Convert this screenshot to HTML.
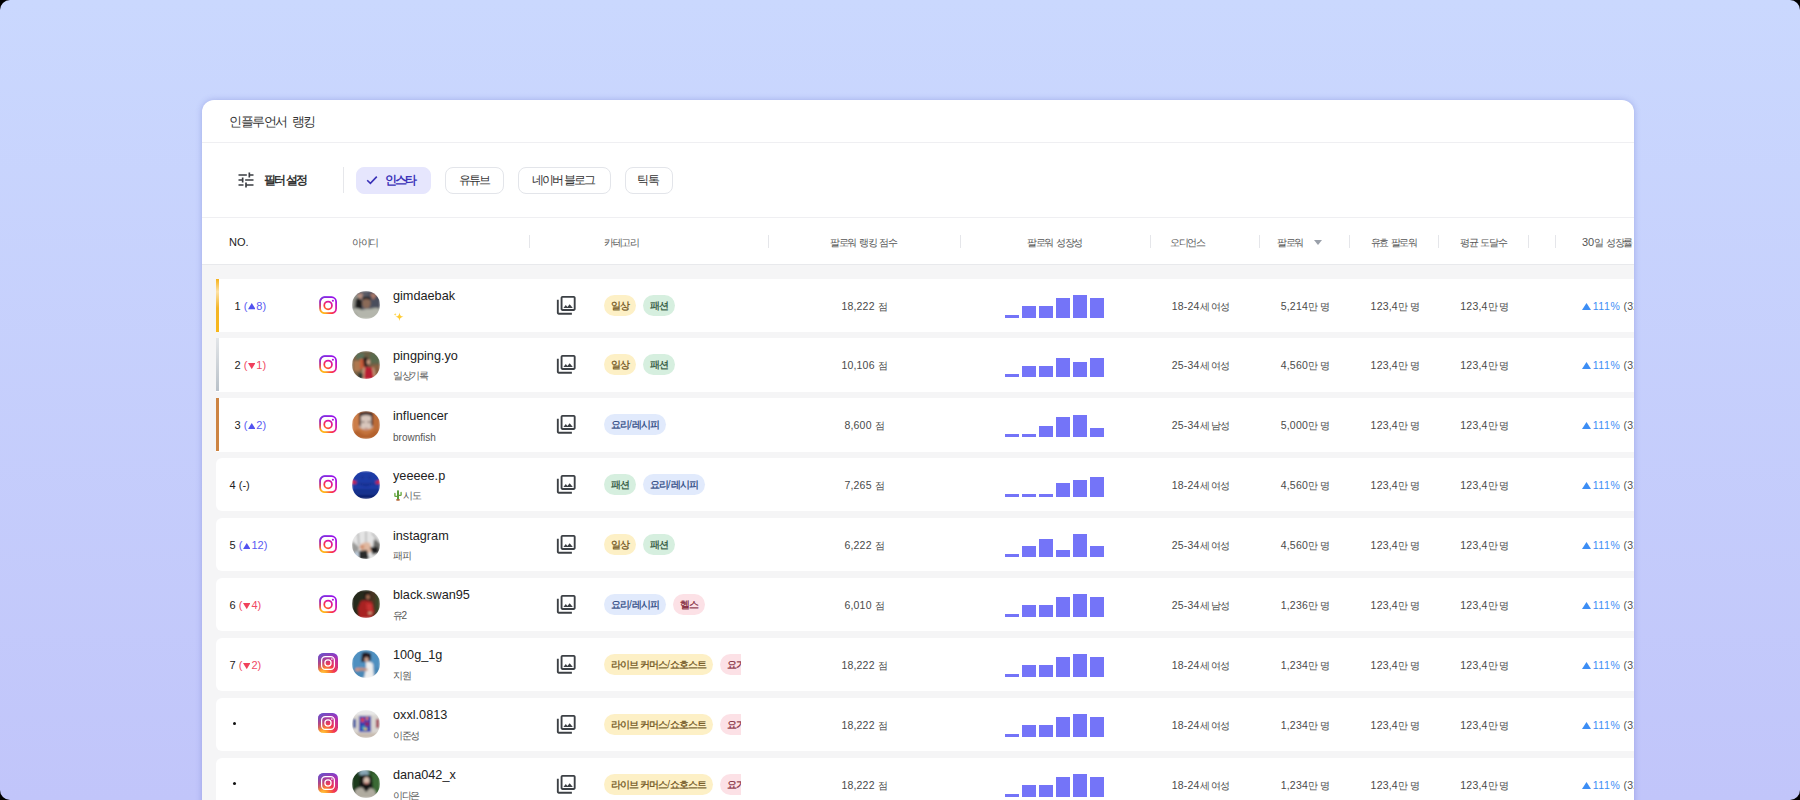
<!DOCTYPE html><html><head><meta charset="utf-8"><style>
*{box-sizing:border-box;margin:0;padding:0}
html,body{width:1800px;height:800px;overflow:hidden;background:#000;font-family:"Liberation Sans",sans-serif}
#frame{position:absolute;left:0;top:0;width:1800px;height:800px;border-radius:10px;overflow:hidden;
 background:linear-gradient(180deg,#cad8fe 0%,#c1c5fa 100%)}
#card{position:absolute;left:202px;top:100px;width:1432px;height:760px;background:#fff;border-radius:12px;overflow:hidden;
 box-shadow:0 0 6px rgba(80,90,190,.32)}
.a{position:absolute;white-space:nowrap}
#title{left:27px;top:13px;font-size:13px;color:#333;letter-spacing:-1.4px;word-spacing:2.5px}
.hl{position:absolute;left:0;width:100%;height:1px;background:#efeff2}
#body{position:absolute;left:0;top:164px;width:100%;height:700px;background:#f5f5f6;border-top:1px solid #e8e9ec}
#flt{left:62px;top:72px;font-size:12px;color:#333;font-weight:bold;letter-spacing:-2.3px;word-spacing:2px}
.chip{position:absolute;top:67px;height:27px;border:1px solid #e3e5ea;border-radius:8px;color:#333}
.chip span{position:absolute;top:4.5px;font-size:11.5px;letter-spacing:-1.9px;line-height:14px;white-space:nowrap}
.th{position:absolute;top:235px;font-size:11px;color:#555;line-height:14px;white-space:nowrap}
.th .h{font-size:10px;letter-spacing:-1.45px;word-spacing:2px}
.sep{position:absolute;top:135px;width:1px;height:13px;background:#e5e6ea}
.row{position:absolute;left:14px;width:1500px;height:53.2px;background:#fff;border-radius:6px}
.row.top{border-radius:0 6px 6px 0}
.bord{position:absolute;left:0;top:0;width:3.2px;height:53px}
.rk{position:absolute;top:20px;font-size:11px;color:#222;line-height:14px}
.ig{position:absolute;left:103px;top:17px;width:18px;height:18px}
.av{position:absolute;left:136px;top:12.5px;width:28px;height:28px}
.nm{position:absolute;left:177px;top:9.5px;font-size:12.7px;color:#222;line-height:16px}
.sub{position:absolute;left:177px;top:32px;font-size:10px;color:#555;line-height:12px}
.sub .h{letter-spacing:-1.5px}
.gal{position:absolute;left:338.8px;top:15px;width:22.5px;height:22.5px}
.tags{position:absolute;left:388px;top:16px;height:21px;width:137px;overflow:hidden;white-space:nowrap}
.tag{display:inline-block;height:21px;line-height:21px;border-radius:11px;padding:0 7px;font-size:10px;margin-right:6.5px;vertical-align:top}
.tag .h{letter-spacing:-0.95px}
.tag .h{-webkit-text-stroke:0.25px currentColor}
.y{background:#fdf0c6;color:#6e521a}.g{background:#d6efdf;color:#2a5238}.b{background:#e1eafc;color:#27427c}.p{background:#fce1e6;color:#82283a}
.sc{position:absolute;left:552px;width:192px;text-align:center;top:20px;font-size:10.5px;letter-spacing:0.2px;color:#4a4a4a;line-height:14px}
.bars{position:absolute;left:789px;top:0;width:100px;height:53px}
.bars i{position:absolute;bottom:14px;width:13.6px;background:#7474f8}
.c{position:absolute;top:20px;font-size:10.5px;letter-spacing:0.2px;color:#4a4a4a;line-height:14px;white-space:nowrap}
.c .h,.sc .h{font-size:10px;letter-spacing:-1.2px;word-spacing:1.5px}
.tri{width:7.5px;height:6.2px;vertical-align:0px;margin:0 1px 0 0.5px}.tri2{width:9px;height:7px;vertical-align:0px;margin-right:1.5px}
.up{color:#5a5af2}.dn{color:#f04a64}.gr{color:#3d8ef5}
</style></head><body><div id="frame"><div id="card">
<div class="a" id="title">인플루언서 랭킹</div>
<div class="hl" style="top:42px"></div>
<svg class="a" style="left:34.3px;top:70px" width="20" height="20" viewBox="0 0 24 24"><path fill="#3a3d42" d="M3 17v2h6v-2H3zM3 5v2h10V5H3zm10 16v-2h8v-2h-8v-2h-2v6h2zM7 9v2H3v2h4v2h2V9H7zm14 4v-2H11v2h10zm-6-4h2V7h4V5h-4V3h-2v6z"/></svg>
<div class="a" id="flt">필터 설정</div>
<div class="a" style="left:141px;top:67px;width:1px;height:26px;background:#e6e7eb"></div>
<div class="chip" style="left:154px;width:75px;background:#e6e6fd;border-color:#e6e6fd;color:#3b32b8"><svg style="position:absolute;left:9px;top:7px" width="12" height="10" viewBox="0 0 12 10"><path d="M1.2 5.2l3.2 3.2L10.8 1.6" fill="none" stroke="#3b32b8" stroke-width="1.6"/></svg><span style="left:27.5px;font-weight:bold">인스타</span></div>
<div class="chip" style="left:243px;width:59px"><span style="left:13px">유튜브</span></div>
<div class="chip" style="left:316px;width:93px"><span style="left:13px;letter-spacing:-2.2px;word-spacing:2px">네이버 블로그</span></div>
<div class="chip" style="left:422.7px;width:48.5px"><span style="left:11.8px">틱톡</span></div>
<div class="hl" style="top:117px"></div>
<div class="th" style="left:27px;top:134.5px;color:#222">NO.</div>
<div class="th" style="left:150px;top:134.5px"><span class="h">아이디</span></div>
<div class="th" style="left:402px;top:134.5px"><span class="h">카테고리</span></div>
<div class="th" style="left:628px;top:134.5px"><span class="h">팔로워 랭킹 점수</span></div>
<div class="th" style="left:825px;top:134.5px"><span class="h">팔로워 성장성</span></div>
<div class="th" style="left:968px;top:134.5px"><span class="h">오디언스</span></div>
<div class="th" style="left:1075px;top:134.5px"><span class="h">팔로워</span></div>
<div class="th" style="left:1168.5px;top:134.5px"><span class="h">유효 팔로워</span></div>
<div class="th" style="left:1258px;top:134.5px"><span class="h">평균 도달수</span></div>
<div class="th" style="left:1380px;top:134.5px">30<span class="h">일 성장률</span></div>
<div class="sep" style="left:327px"></div>
<div class="sep" style="left:566px"></div>
<div class="sep" style="left:758px"></div>
<div class="sep" style="left:948px"></div>
<div class="sep" style="left:1057px"></div>
<div class="sep" style="left:1147px"></div>
<div class="sep" style="left:1236px"></div>
<div class="sep" style="left:1326px"></div>
<div class="sep" style="left:1353px"></div>
<svg class="a" style="left:1112px;top:140px" width="8" height="5" viewBox="0 0 8 5"><path d="M0 0h8L4 5z" fill="#9aa0aa"/></svg>
<div id="body">
<div class="row top" style="top:13.6px"><div class="bord" style="background:linear-gradient(180deg,#f6b21a 0%,#fde2a6 24%,#f3b426 55%,#f8b718 100%)"></div><div class="rk" style="left:18.5px">1 <span class="up">(<svg class="tri" viewBox="0 0 8 6.5"><path d="M4 0L8 6.5H0z" fill="#5252f0"/></svg>8)</span></div><svg class="ig" viewBox="0 0 18 18"><defs><radialGradient id="igo1" gradientUnits="userSpaceOnUse" cx="3" cy="19" r="22"><stop offset="0" stop-color="#ffd21a"/><stop offset="0.18" stop-color="#ffa81e"/><stop offset="0.42" stop-color="#ff3d3a"/><stop offset="0.65" stop-color="#e01a9a"/><stop offset="0.9" stop-color="#a010e6"/><stop offset="1" stop-color="#9010ea"/></radialGradient><linearGradient id="igl1" gradientUnits="userSpaceOnUse" x1="0" y1="0" x2="8" y2="8"><stop offset="0" stop-color="#5a40f0" stop-opacity="1"/><stop offset="1" stop-color="#5a40f0" stop-opacity="0"/></linearGradient></defs><g fill="none" stroke-width="1.75"><g stroke="url(#igo1)"><rect x="1.1" y="1.2" width="16" height="16" rx="4.6"/><circle cx="9.1" cy="9.4" r="3.85"/></g><g stroke="url(#igl1)"><rect x="1.1" y="1.2" width="16" height="16" rx="4.6"/></g></g><circle cx="13.9" cy="4.7" r="1.05" fill="#b012d8"/></svg><svg class="av" viewBox="0 0 28 28"><defs><clipPath id="avc0"><circle cx="14" cy="14" r="14"/></clipPath><filter id="avb0" x="-10%" y="-10%" width="120%" height="120%"><feGaussianBlur stdDeviation="0.9"/></filter></defs><g clip-path="url(#avc0)"><g filter="url(#avb0)"><rect width="28" height="28" fill="#5a5c66"/><rect x="16" y="0" width="12" height="16" fill="#4a4d5c"/>
<path d="M0 6 Q4 2 8 3 L10 12 L4 18 L0 16z" fill="#8e8e86"/><path d="M5 4 Q8 1 11 3 L9 10z" fill="#b89080"/><path d="M18 3 Q22 1 25 4 L21 9z" fill="#a87868"/>
<path d="M4 8 Q8 6 10 10 L10 19 L3 17z" fill="#1c1c1e"/>
<ellipse cx="14.5" cy="12" rx="4.2" ry="5.5" fill="#8a6a58"/><path d="M10 7 Q14 4 19 7 L18 9 Q14 7 11 9z" fill="#2a2220"/>
<path d="M0 18 Q6 16 10 19 L14 18 L19 18 Q24 16 28 18 L28 28 L0 28z" fill="#b4b6ac"/><path d="M3 20 L6 28 L4 28z" fill="#8a8c84"/></g></g></svg><div class="nm">gimdaebak</div><div class="sub"><svg width="11" height="10" viewBox="0 0 11 10" style="vertical-align:top;margin-top:1px"><path d="M6.5 0.5C7 3.5 7.5 4 10.5 4.8 7.5 5.6 7 6 6.5 9.2 6 6 5.5 5.6 2.5 4.8 5.5 4 6 3.5 6.5.5z" fill="#ffcc33"/><path d="M2.2 0.8C2.4 2 2.6 2.2 3.6 2.4 2.6 2.6 2.4 2.8 2.2 4 2 2.8 1.8 2.6.8 2.4 1.8 2.2 2 2 2.2.8z" fill="#ffd54a"/></svg></div><svg class="gal" viewBox="0 0 24 24"><path fill="#3c4045" d="M20 4v12H8V4h12m0-2H8c-1.1 0-2 .9-2 2v12c0 1.1.9 2 2 2h12c1.1 0 2-.9 2-2V4c0-1.1-.9-2-2-2zm-8.5 9.67l1.69 2.26 2.48-3.1L19 15H9zM2 6v14c0 1.1.9 2 2 2h14v-2H4V6H2z"/></svg><div class="tags"><span class="tag y"><span class="h">일상</span></span><span class="tag g"><span class="h">패션</span></span></div><div class="sc">18,222 <span class="h">점</span></div><div class="bars"><i style="left:0.0px;height:3px"></i><i style="left:17.0px;height:11.5px"></i><i style="left:34.0px;height:11.5px"></i><i style="left:51.0px;height:20px"></i><i style="left:68.0px;height:22.7px"></i><i style="left:85.0px;height:20px"></i></div><div class="c" style="left:955.7px">18-24<span class="h">세 여성</span></div><div class="c" style="left:1064.7px">5,214<span class="h">만 명</span></div><div class="c" style="left:1154.6px">123,4<span class="h">만 명</span></div><div class="c" style="left:1244.3px">123,4<span class="h">만 명</span></div><div class="c gr" style="left:1366.2px"><svg class="tri2" viewBox="0 0 9 7"><path d="M4.5 0L9 7H0z" fill="#3d8ef5"/></svg><span style="letter-spacing:0.6px">111%</span> <span style="color:#555">(32.4만)</span></div></div>
<div class="row top" style="top:73.475px"><div class="bord" style="background:linear-gradient(180deg,#e2e5e8 0%,#b9c1c9 100%)"></div><div class="rk" style="left:18.5px">2 <span class="dn">(<svg class="tri" viewBox="0 0 8 6.5"><path d="M0 0H8L4 6.5z" fill="#f0405c"/></svg>1)</span></div><svg class="ig" viewBox="0 0 18 18"><defs><radialGradient id="igo2" gradientUnits="userSpaceOnUse" cx="3" cy="19" r="22"><stop offset="0" stop-color="#ffd21a"/><stop offset="0.18" stop-color="#ffa81e"/><stop offset="0.42" stop-color="#ff3d3a"/><stop offset="0.65" stop-color="#e01a9a"/><stop offset="0.9" stop-color="#a010e6"/><stop offset="1" stop-color="#9010ea"/></radialGradient><linearGradient id="igl2" gradientUnits="userSpaceOnUse" x1="0" y1="0" x2="8" y2="8"><stop offset="0" stop-color="#5a40f0" stop-opacity="1"/><stop offset="1" stop-color="#5a40f0" stop-opacity="0"/></linearGradient></defs><g fill="none" stroke-width="1.75"><g stroke="url(#igo2)"><rect x="1.1" y="1.2" width="16" height="16" rx="4.6"/><circle cx="9.1" cy="9.4" r="3.85"/></g><g stroke="url(#igl2)"><rect x="1.1" y="1.2" width="16" height="16" rx="4.6"/></g></g><circle cx="13.9" cy="4.7" r="1.05" fill="#b012d8"/></svg><svg class="av" viewBox="0 0 28 28"><defs><clipPath id="avc1"><circle cx="14" cy="14" r="14"/></clipPath><filter id="avb1" x="-10%" y="-10%" width="120%" height="120%"><feGaussianBlur stdDeviation="0.9"/></filter></defs><g clip-path="url(#avc1)"><g filter="url(#avb1)"><rect width="28" height="28" fill="#6a5e44"/><rect x="0" y="0" width="9" height="28" fill="#7a6446"/><rect x="2" y="10" width="6" height="10" fill="#b07850"/><rect x="8" y="4" width="4" height="14" fill="#c85a38"/>
<rect x="18" y="2" width="10" height="10" fill="#5a6a4e"/><rect x="20" y="14" width="8" height="12" fill="#8a6040"/><rect x="4" y="2" width="8" height="6" fill="#5a7058"/>
<path d="M11 7 Q15 5 17 9 L17 15 L12 16z" fill="#2a1e1c"/><ellipse cx="16.5" cy="11" rx="1.8" ry="2.8" fill="#c89a80"/>
<path d="M13 16 L20 16 L23 28 L10 28z" fill="#b81c30"/><path d="M11 17 L13 16 L12 28 L9 28z" fill="#c8a080"/><path d="M20 16 L22 17 L24 28 L22 28z" fill="#c8a080"/><rect x="6" y="22" width="5" height="6" fill="#303830"/></g></g></svg><div class="nm">pingping.yo</div><div class="sub"><span class="h">일상기록</span></div><svg class="gal" viewBox="0 0 24 24"><path fill="#3c4045" d="M20 4v12H8V4h12m0-2H8c-1.1 0-2 .9-2 2v12c0 1.1.9 2 2 2h12c1.1 0 2-.9 2-2V4c0-1.1-.9-2-2-2zm-8.5 9.67l1.69 2.26 2.48-3.1L19 15H9zM2 6v14c0 1.1.9 2 2 2h14v-2H4V6H2z"/></svg><div class="tags"><span class="tag y"><span class="h">일상</span></span><span class="tag g"><span class="h">패션</span></span></div><div class="sc">10,106 <span class="h">점</span></div><div class="bars"><i style="left:0.0px;height:3px"></i><i style="left:17.0px;height:11.6px"></i><i style="left:34.0px;height:11.6px"></i><i style="left:51.0px;height:19.9px"></i><i style="left:68.0px;height:15.8px"></i><i style="left:85.0px;height:19.9px"></i></div><div class="c" style="left:955.7px">25-34<span class="h">세 여성</span></div><div class="c" style="left:1064.7px">4,560<span class="h">만 명</span></div><div class="c" style="left:1154.6px">123,4<span class="h">만 명</span></div><div class="c" style="left:1244.3px">123,4<span class="h">만 명</span></div><div class="c gr" style="left:1366.2px"><svg class="tri2" viewBox="0 0 9 7"><path d="M4.5 0L9 7H0z" fill="#3d8ef5"/></svg><span style="letter-spacing:0.6px">111%</span> <span style="color:#555">(32.4만)</span></div></div>
<div class="row top" style="top:133.35px"><div class="bord" style="background:#cd8442"></div><div class="rk" style="left:18.5px">3 <span class="up">(<svg class="tri" viewBox="0 0 8 6.5"><path d="M4 0L8 6.5H0z" fill="#5252f0"/></svg>2)</span></div><svg class="ig" viewBox="0 0 18 18"><defs><radialGradient id="igo3" gradientUnits="userSpaceOnUse" cx="3" cy="19" r="22"><stop offset="0" stop-color="#ffd21a"/><stop offset="0.18" stop-color="#ffa81e"/><stop offset="0.42" stop-color="#ff3d3a"/><stop offset="0.65" stop-color="#e01a9a"/><stop offset="0.9" stop-color="#a010e6"/><stop offset="1" stop-color="#9010ea"/></radialGradient><linearGradient id="igl3" gradientUnits="userSpaceOnUse" x1="0" y1="0" x2="8" y2="8"><stop offset="0" stop-color="#5a40f0" stop-opacity="1"/><stop offset="1" stop-color="#5a40f0" stop-opacity="0"/></linearGradient></defs><g fill="none" stroke-width="1.75"><g stroke="url(#igo3)"><rect x="1.1" y="1.2" width="16" height="16" rx="4.6"/><circle cx="9.1" cy="9.4" r="3.85"/></g><g stroke="url(#igl3)"><rect x="1.1" y="1.2" width="16" height="16" rx="4.6"/></g></g><circle cx="13.9" cy="4.7" r="1.05" fill="#b012d8"/></svg><svg class="av" viewBox="0 0 28 28"><defs><clipPath id="avc2"><circle cx="14" cy="14" r="14"/></clipPath><filter id="avb2" x="-10%" y="-10%" width="120%" height="120%"><feGaussianBlur stdDeviation="0.9"/></filter></defs><g clip-path="url(#avc2)"><g filter="url(#avb2)"><rect width="28" height="28" fill="#c4743e"/>
<path d="M8 3 Q14 0 20 3 L21 16 Q14 22 7 16z" fill="#d8c6bc"/><path d="M7 2 Q14 -1 21 2 L21 9 L19 5 Q14 3 9 5 L7 9z" fill="#3a2c2a"/><path d="M7 5 L9 5 L9 16 L7 14z" fill="#4a3430"/><path d="M21 5 L19 5 L19 16 L21 14z" fill="#4a3430"/>
<rect x="9.5" y="10.5" width="3" height="1" fill="#50403a"/><rect x="15.5" y="10.5" width="3" height="1" fill="#50403a"/><rect x="12.5" y="17" width="3.5" height="1.2" fill="#b87870"/>
<path d="M0 12 Q6 22 14 24 Q22 22 28 12 L28 28 L0 28z" fill="#b4622e"/><path d="M0 0 L7 0 L7 18 L0 22z" fill="#cc7e4a"/><path d="M28 0 L21 0 L21 18 L28 22z" fill="#bc6c38"/></g></g></svg><div class="nm">influencer</div><div class="sub"><span style="position:relative;top:1.3px">brownfish</span></div><svg class="gal" viewBox="0 0 24 24"><path fill="#3c4045" d="M20 4v12H8V4h12m0-2H8c-1.1 0-2 .9-2 2v12c0 1.1.9 2 2 2h12c1.1 0 2-.9 2-2V4c0-1.1-.9-2-2-2zm-8.5 9.67l1.69 2.26 2.48-3.1L19 15H9zM2 6v14c0 1.1.9 2 2 2h14v-2H4V6H2z"/></svg><div class="tags"><span class="tag b"><span class="h">요리</span>/<span class="h">레시피</span></span></div><div class="sc">8,600 <span class="h">점</span></div><div class="bars"><i style="left:0.0px;height:2.9px"></i><i style="left:17.0px;height:2.9px"></i><i style="left:34.0px;height:11.6px"></i><i style="left:51.0px;height:20.2px"></i><i style="left:68.0px;height:22.8px"></i><i style="left:85.0px;height:9.8px"></i></div><div class="c" style="left:955.7px">25-34<span class="h">세 남성</span></div><div class="c" style="left:1064.7px">5,000<span class="h">만 명</span></div><div class="c" style="left:1154.6px">123,4<span class="h">만 명</span></div><div class="c" style="left:1244.3px">123,4<span class="h">만 명</span></div><div class="c gr" style="left:1366.2px"><svg class="tri2" viewBox="0 0 9 7"><path d="M4.5 0L9 7H0z" fill="#3d8ef5"/></svg><span style="letter-spacing:0.6px">111%</span> <span style="color:#555">(32.4만)</span></div></div>
<div class="row" style="top:193.225px"><div class="rk" style="left:13.6px">4 (-)</div><svg class="ig" viewBox="0 0 18 18"><defs><radialGradient id="igo4" gradientUnits="userSpaceOnUse" cx="3" cy="19" r="22"><stop offset="0" stop-color="#ffd21a"/><stop offset="0.18" stop-color="#ffa81e"/><stop offset="0.42" stop-color="#ff3d3a"/><stop offset="0.65" stop-color="#e01a9a"/><stop offset="0.9" stop-color="#a010e6"/><stop offset="1" stop-color="#9010ea"/></radialGradient><linearGradient id="igl4" gradientUnits="userSpaceOnUse" x1="0" y1="0" x2="8" y2="8"><stop offset="0" stop-color="#5a40f0" stop-opacity="1"/><stop offset="1" stop-color="#5a40f0" stop-opacity="0"/></linearGradient></defs><g fill="none" stroke-width="1.75"><g stroke="url(#igo4)"><rect x="1.1" y="1.2" width="16" height="16" rx="4.6"/><circle cx="9.1" cy="9.4" r="3.85"/></g><g stroke="url(#igl4)"><rect x="1.1" y="1.2" width="16" height="16" rx="4.6"/></g></g><circle cx="13.9" cy="4.7" r="1.05" fill="#b012d8"/></svg><svg class="av" viewBox="0 0 28 28"><defs><clipPath id="avc3"><circle cx="14" cy="14" r="14"/></clipPath><filter id="avb3" x="-10%" y="-10%" width="120%" height="120%"><feGaussianBlur stdDeviation="0.9"/></filter></defs><g clip-path="url(#avc3)"><g filter="url(#avb3)"><rect width="28" height="28" fill="#1f3aa6"/><rect x="0" y="18" width="28" height="10" fill="#18308e"/><rect x="0" y="12" width="28" height="2" fill="#1a3296"/>
<path d="M0 9 L5 11 L3 13 L0 12z" fill="#e0202a"/><path d="M28 9 L23 11 L25 13 L28 12z" fill="#e0202a"/><path d="M8 12 Q14 17 20 12" stroke="#142a80" stroke-width="1" fill="none"/>
<path d="M9 5 L12 8 M12 5 L9 8 M16 5 L19 8 M19 5 L16 8" stroke="#142a80" stroke-width=".8"/><rect x="0" y="24" width="28" height="4" fill="#10246e"/></g></g></svg><div class="nm">yeeeee.p</div><div class="sub"><svg width="10" height="11" viewBox="0 0 10 11" style="vertical-align:top;margin-top:0px"><path d="M4 1.2c0-.6.4-1 1-1s1 .4 1 1V10H4z" fill="#5a9a3a"/><path d="M1.2 3.5c0-.5.3-.8.7-.8s.7.3.7.8v2.2H4v1.4H2.6C1.8 7.1 1.2 6.5 1.2 5.7z" fill="#6aaa42"/><path d="M8.8 2.5c0-.5-.3-.8-.7-.8s-.7.3-.7.8v2.2H6v1.4h1.4c.8 0 1.4-.6 1.4-1.4z" fill="#6aaa42"/><path d="M3 9.2h4l-.5 1.6h-3z" fill="#b86a3a"/></svg><span class="h">시도</span></div><svg class="gal" viewBox="0 0 24 24"><path fill="#3c4045" d="M20 4v12H8V4h12m0-2H8c-1.1 0-2 .9-2 2v12c0 1.1.9 2 2 2h12c1.1 0 2-.9 2-2V4c0-1.1-.9-2-2-2zm-8.5 9.67l1.69 2.26 2.48-3.1L19 15H9zM2 6v14c0 1.1.9 2 2 2h14v-2H4V6H2z"/></svg><div class="tags"><span class="tag g"><span class="h">패션</span></span><span class="tag b"><span class="h">요리</span>/<span class="h">레시피</span></span></div><div class="sc">7,265 <span class="h">점</span></div><div class="bars"><i style="left:0.0px;height:3.2px"></i><i style="left:17.0px;height:3.2px"></i><i style="left:34.0px;height:3.2px"></i><i style="left:51.0px;height:14.5px"></i><i style="left:68.0px;height:17px"></i><i style="left:85.0px;height:20.2px"></i></div><div class="c" style="left:955.7px">18-24<span class="h">세 여성</span></div><div class="c" style="left:1064.7px">4,560<span class="h">만 명</span></div><div class="c" style="left:1154.6px">123,4<span class="h">만 명</span></div><div class="c" style="left:1244.3px">123,4<span class="h">만 명</span></div><div class="c gr" style="left:1366.2px"><svg class="tri2" viewBox="0 0 9 7"><path d="M4.5 0L9 7H0z" fill="#3d8ef5"/></svg><span style="letter-spacing:0.6px">111%</span> <span style="color:#555">(32.4만)</span></div></div>
<div class="row" style="top:253.1px"><div class="rk" style="left:13.6px">5 <span class="up">(<svg class="tri" viewBox="0 0 8 6.5"><path d="M4 0L8 6.5H0z" fill="#5252f0"/></svg>12)</span></div><svg class="ig" viewBox="0 0 18 18"><defs><radialGradient id="igo5" gradientUnits="userSpaceOnUse" cx="3" cy="19" r="22"><stop offset="0" stop-color="#ffd21a"/><stop offset="0.18" stop-color="#ffa81e"/><stop offset="0.42" stop-color="#ff3d3a"/><stop offset="0.65" stop-color="#e01a9a"/><stop offset="0.9" stop-color="#a010e6"/><stop offset="1" stop-color="#9010ea"/></radialGradient><linearGradient id="igl5" gradientUnits="userSpaceOnUse" x1="0" y1="0" x2="8" y2="8"><stop offset="0" stop-color="#5a40f0" stop-opacity="1"/><stop offset="1" stop-color="#5a40f0" stop-opacity="0"/></linearGradient></defs><g fill="none" stroke-width="1.75"><g stroke="url(#igo5)"><rect x="1.1" y="1.2" width="16" height="16" rx="4.6"/><circle cx="9.1" cy="9.4" r="3.85"/></g><g stroke="url(#igl5)"><rect x="1.1" y="1.2" width="16" height="16" rx="4.6"/></g></g><circle cx="13.9" cy="4.7" r="1.05" fill="#b012d8"/></svg><svg class="av" viewBox="0 0 28 28"><defs><clipPath id="avc4"><circle cx="14" cy="14" r="14"/></clipPath><filter id="avb4" x="-10%" y="-10%" width="120%" height="120%"><feGaussianBlur stdDeviation="0.9"/></filter></defs><g clip-path="url(#avc4)"><g filter="url(#avb4)"><rect width="28" height="28" fill="#e4e4e4"/><path d="M6 2 L7 14" stroke="#909090" stroke-width="1"/><path d="M14 0 L14 12" stroke="#a0a0a0" stroke-width="1"/><path d="M20 2 L26 10" stroke="#808080" stroke-width="1"/>
<path d="M0 10 L7 16 L6 24 L0 24z" fill="#9a9a98"/><path d="M22 8 L28 12 L28 22 L20 24z" fill="#6a6a68"/>
<path d="M8 14 Q12 10 18 12 L20 20 L14 24 L9 20z" fill="#e0b8a0"/><ellipse cx="10" cy="16" rx="2.5" ry="2" fill="#d09070"/>
<path d="M7 20 L15 19 L17 28 L7 28z" fill="#2a2a2a"/><path d="M18 16 L26 16 L26 22 L20 22z" fill="#1a1a1a"/><path d="M3 20 L7 22 L6 28 L2 28z" fill="#b8c8d8"/></g></g></svg><div class="nm">instagram</div><div class="sub"><span class="h">패피</span></div><svg class="gal" viewBox="0 0 24 24"><path fill="#3c4045" d="M20 4v12H8V4h12m0-2H8c-1.1 0-2 .9-2 2v12c0 1.1.9 2 2 2h12c1.1 0 2-.9 2-2V4c0-1.1-.9-2-2-2zm-8.5 9.67l1.69 2.26 2.48-3.1L19 15H9zM2 6v14c0 1.1.9 2 2 2h14v-2H4V6H2z"/></svg><div class="tags"><span class="tag y"><span class="h">일상</span></span><span class="tag g"><span class="h">패션</span></span></div><div class="sc">6,222 <span class="h">점</span></div><div class="bars"><i style="left:0.0px;height:3.4px"></i><i style="left:17.0px;height:11.6px"></i><i style="left:34.0px;height:17.7px"></i><i style="left:51.0px;height:7.6px"></i><i style="left:68.0px;height:22.8px"></i><i style="left:85.0px;height:11.6px"></i></div><div class="c" style="left:955.7px">25-34<span class="h">세 여성</span></div><div class="c" style="left:1064.7px">4,560<span class="h">만 명</span></div><div class="c" style="left:1154.6px">123,4<span class="h">만 명</span></div><div class="c" style="left:1244.3px">123,4<span class="h">만 명</span></div><div class="c gr" style="left:1366.2px"><svg class="tri2" viewBox="0 0 9 7"><path d="M4.5 0L9 7H0z" fill="#3d8ef5"/></svg><span style="letter-spacing:0.6px">111%</span> <span style="color:#555">(32.4만)</span></div></div>
<div class="row" style="top:312.975px"><div class="rk" style="left:13.6px">6 <span class="dn">(<svg class="tri" viewBox="0 0 8 6.5"><path d="M0 0H8L4 6.5z" fill="#f0405c"/></svg>4)</span></div><svg class="ig" viewBox="0 0 18 18"><defs><radialGradient id="igo6" gradientUnits="userSpaceOnUse" cx="3" cy="19" r="22"><stop offset="0" stop-color="#ffd21a"/><stop offset="0.18" stop-color="#ffa81e"/><stop offset="0.42" stop-color="#ff3d3a"/><stop offset="0.65" stop-color="#e01a9a"/><stop offset="0.9" stop-color="#a010e6"/><stop offset="1" stop-color="#9010ea"/></radialGradient><linearGradient id="igl6" gradientUnits="userSpaceOnUse" x1="0" y1="0" x2="8" y2="8"><stop offset="0" stop-color="#5a40f0" stop-opacity="1"/><stop offset="1" stop-color="#5a40f0" stop-opacity="0"/></linearGradient></defs><g fill="none" stroke-width="1.75"><g stroke="url(#igo6)"><rect x="1.1" y="1.2" width="16" height="16" rx="4.6"/><circle cx="9.1" cy="9.4" r="3.85"/></g><g stroke="url(#igl6)"><rect x="1.1" y="1.2" width="16" height="16" rx="4.6"/></g></g><circle cx="13.9" cy="4.7" r="1.05" fill="#b012d8"/></svg><svg class="av" viewBox="0 0 28 28"><defs><clipPath id="avc5"><circle cx="14" cy="14" r="14"/></clipPath><filter id="avb5" x="-10%" y="-10%" width="120%" height="120%"><feGaussianBlur stdDeviation="0.9"/></filter></defs><g clip-path="url(#avc5)"><g filter="url(#avb5)"><rect width="28" height="28" fill="#272a1e"/><rect x="18" y="0" width="10" height="28" fill="#4a3424"/><rect x="24" y="4" width="3" height="20" fill="#3a4a2a"/>
<path d="M12 3 Q16 1 19 4 L19 10 L13 11z" fill="#281c18"/><ellipse cx="16" cy="7" rx="2" ry="2.6" fill="#a06a50"/>
<path d="M9 11 Q14 9 20 12 L22 22 L20 28 L7 28 L6 18z" fill="#a82424"/><path d="M14 13 L20 14 L21 22 L15 20z" fill="#c83030"/><ellipse cx="18" cy="23" rx="2" ry="1.5" fill="#c8a080"/></g></g></svg><div class="nm">black.swan95</div><div class="sub"><span class="h">유</span>2</div><svg class="gal" viewBox="0 0 24 24"><path fill="#3c4045" d="M20 4v12H8V4h12m0-2H8c-1.1 0-2 .9-2 2v12c0 1.1.9 2 2 2h12c1.1 0 2-.9 2-2V4c0-1.1-.9-2-2-2zm-8.5 9.67l1.69 2.26 2.48-3.1L19 15H9zM2 6v14c0 1.1.9 2 2 2h14v-2H4V6H2z"/></svg><div class="tags"><span class="tag b"><span class="h">요리</span>/<span class="h">레시피</span></span><span class="tag p"><span class="h">헬스</span></span></div><div class="sc">6,010 <span class="h">점</span></div><div class="bars"><i style="left:0.0px;height:3px"></i><i style="left:17.0px;height:11.5px"></i><i style="left:34.0px;height:11.5px"></i><i style="left:51.0px;height:20px"></i><i style="left:68.0px;height:22.7px"></i><i style="left:85.0px;height:20px"></i></div><div class="c" style="left:955.7px">25-34<span class="h">세 남성</span></div><div class="c" style="left:1064.7px">1,236<span class="h">만 명</span></div><div class="c" style="left:1154.6px">123,4<span class="h">만 명</span></div><div class="c" style="left:1244.3px">123,4<span class="h">만 명</span></div><div class="c gr" style="left:1366.2px"><svg class="tri2" viewBox="0 0 9 7"><path d="M4.5 0L9 7H0z" fill="#3d8ef5"/></svg><span style="letter-spacing:0.6px">111%</span> <span style="color:#555">(32.4만)</span></div></div>
<div class="row" style="top:372.85px"><div class="rk" style="left:13.6px">7 <span class="dn">(<svg class="tri" viewBox="0 0 8 6.5"><path d="M0 0H8L4 6.5z" fill="#f0405c"/></svg>2)</span></div><svg class="ig" style="left:102px;top:15px;width:20px;height:20px" viewBox="0 0 20 20"><defs><radialGradient id="igf7" cx="0.25" cy="1.05" r="1.25"><stop offset="0" stop-color="#ffd34a"/><stop offset="0.18" stop-color="#ff9a2a"/><stop offset="0.45" stop-color="#f3394f"/><stop offset="0.75" stop-color="#c42f9a"/><stop offset="1" stop-color="#7a3ad8"/></radialGradient><linearGradient id="igb7" x1="0" y1="0" x2="0.5" y2="0.6"><stop offset="0" stop-color="#4f5bd5" stop-opacity=".9"/><stop offset="1" stop-color="#4f5bd5" stop-opacity="0"/></linearGradient></defs><rect x="0" y="0" width="20" height="20" rx="5.5" fill="url(#igf7)"/><rect x="0" y="0" width="20" height="20" rx="5.5" fill="url(#igb7)"/><rect x="3.6" y="3.6" width="12.8" height="12.8" rx="3.6" fill="none" stroke="#fff" stroke-width="1.25"/><circle cx="10" cy="10" r="3.1" fill="none" stroke="#fff" stroke-width="1.25"/><circle cx="13.9" cy="6.1" r=".8" fill="#fff"/></svg><svg class="av" viewBox="0 0 28 28"><defs><clipPath id="avc6"><circle cx="14" cy="14" r="14"/></clipPath><filter id="avb6" x="-10%" y="-10%" width="120%" height="120%"><feGaussianBlur stdDeviation="0.9"/></filter></defs><g clip-path="url(#avc6)"><g filter="url(#avb6)"><rect width="28" height="28" fill="#5090c0"/><rect x="0" y="18" width="28" height="10" fill="#4a88b6"/>
<path d="M10 3 Q15 1 19 4 L19 10 L15 12 L9 12z" fill="#24181a"/><ellipse cx="14.5" cy="9.5" rx="2.2" ry="2.5" fill="#c8a090"/>
<path d="M14 12 Q19 11 21 14 L22 28 L12 28 L14 18z" fill="#eeeeee"/><path d="M4 18 Q10 17 16 19 L15 21 Q9 20 5 21z" fill="#c89078"/><ellipse cx="5" cy="19.5" rx="2" ry="1.6" fill="#d89a80"/></g></g></svg><div class="nm">100g_1g</div><div class="sub"><span class="h">지원</span></div><svg class="gal" viewBox="0 0 24 24"><path fill="#3c4045" d="M20 4v12H8V4h12m0-2H8c-1.1 0-2 .9-2 2v12c0 1.1.9 2 2 2h12c1.1 0 2-.9 2-2V4c0-1.1-.9-2-2-2zm-8.5 9.67l1.69 2.26 2.48-3.1L19 15H9zM2 6v14c0 1.1.9 2 2 2h14v-2H4V6H2z"/></svg><div class="tags"><span class="tag y"><span class="h">라이브 커머스</span>/<span class="h">쇼호스트</span></span><span class="tag p"><span class="h">요가</span></span></div><div class="sc">18,222 <span class="h">점</span></div><div class="bars"><i style="left:0.0px;height:3px"></i><i style="left:17.0px;height:11.5px"></i><i style="left:34.0px;height:11.5px"></i><i style="left:51.0px;height:20px"></i><i style="left:68.0px;height:22.7px"></i><i style="left:85.0px;height:20px"></i></div><div class="c" style="left:955.7px">18-24<span class="h">세 여성</span></div><div class="c" style="left:1064.7px">1,234<span class="h">만 명</span></div><div class="c" style="left:1154.6px">123,4<span class="h">만 명</span></div><div class="c" style="left:1244.3px">123,4<span class="h">만 명</span></div><div class="c gr" style="left:1366.2px"><svg class="tri2" viewBox="0 0 9 7"><path d="M4.5 0L9 7H0z" fill="#3d8ef5"/></svg><span style="letter-spacing:0.6px">111%</span> <span style="color:#555">(32.4만)</span></div></div>
<div class="row" style="top:432.725px"><div class="a" style="left:16.9px;top:24.6px;width:3px;height:3px;border-radius:50%;background:#111"></div><svg class="ig" style="left:102px;top:15px;width:20px;height:20px" viewBox="0 0 20 20"><defs><radialGradient id="igf8" cx="0.25" cy="1.05" r="1.25"><stop offset="0" stop-color="#ffd34a"/><stop offset="0.18" stop-color="#ff9a2a"/><stop offset="0.45" stop-color="#f3394f"/><stop offset="0.75" stop-color="#c42f9a"/><stop offset="1" stop-color="#7a3ad8"/></radialGradient><linearGradient id="igb8" x1="0" y1="0" x2="0.5" y2="0.6"><stop offset="0" stop-color="#4f5bd5" stop-opacity=".9"/><stop offset="1" stop-color="#4f5bd5" stop-opacity="0"/></linearGradient></defs><rect x="0" y="0" width="20" height="20" rx="5.5" fill="url(#igf8)"/><rect x="0" y="0" width="20" height="20" rx="5.5" fill="url(#igb8)"/><rect x="3.6" y="3.6" width="12.8" height="12.8" rx="3.6" fill="none" stroke="#fff" stroke-width="1.25"/><circle cx="10" cy="10" r="3.1" fill="none" stroke="#fff" stroke-width="1.25"/><circle cx="13.9" cy="6.1" r=".8" fill="#fff"/></svg><svg class="av" viewBox="0 0 28 28"><defs><clipPath id="avc7"><circle cx="14" cy="14" r="14"/></clipPath><filter id="avb7" x="-10%" y="-10%" width="120%" height="120%"><feGaussianBlur stdDeviation="0.9"/></filter></defs><g clip-path="url(#avc7)"><g filter="url(#avb7)"><rect width="28" height="28" fill="#d8d4d0"/><rect x="0" y="0" width="28" height="5" fill="#e8e8e8"/><rect x="0" y="23" width="28" height="5" fill="#c8bcb0"/>
<rect x="7" y="6" width="12" height="16" fill="#3040b0"/><rect x="9" y="8" width="3" height="4" fill="#e04030"/><rect x="13" y="12" width="4" height="4" fill="#902060"/><rect x="10" y="16" width="3" height="4" fill="#30a0c0"/><rect x="14" y="7" width="2" height="3" fill="#f08030"/><rect x="12" y="18" width="3" height="2" fill="#e0d030"/>
<rect x="1" y="9" width="3" height="9" fill="#3050a0"/><rect x="24" y="9" width="3" height="9" fill="#a03050"/></g></g></svg><div class="nm">oxxl.0813</div><div class="sub"><span class="h">이준성</span></div><svg class="gal" viewBox="0 0 24 24"><path fill="#3c4045" d="M20 4v12H8V4h12m0-2H8c-1.1 0-2 .9-2 2v12c0 1.1.9 2 2 2h12c1.1 0 2-.9 2-2V4c0-1.1-.9-2-2-2zm-8.5 9.67l1.69 2.26 2.48-3.1L19 15H9zM2 6v14c0 1.1.9 2 2 2h14v-2H4V6H2z"/></svg><div class="tags"><span class="tag y"><span class="h">라이브 커머스</span>/<span class="h">쇼호스트</span></span><span class="tag p"><span class="h">요가</span></span></div><div class="sc">18,222 <span class="h">점</span></div><div class="bars"><i style="left:0.0px;height:3px"></i><i style="left:17.0px;height:11.5px"></i><i style="left:34.0px;height:11.5px"></i><i style="left:51.0px;height:20px"></i><i style="left:68.0px;height:22.7px"></i><i style="left:85.0px;height:20px"></i></div><div class="c" style="left:955.7px">18-24<span class="h">세 여성</span></div><div class="c" style="left:1064.7px">1,234<span class="h">만 명</span></div><div class="c" style="left:1154.6px">123,4<span class="h">만 명</span></div><div class="c" style="left:1244.3px">123,4<span class="h">만 명</span></div><div class="c gr" style="left:1366.2px"><svg class="tri2" viewBox="0 0 9 7"><path d="M4.5 0L9 7H0z" fill="#3d8ef5"/></svg><span style="letter-spacing:0.6px">111%</span> <span style="color:#555">(32.4만)</span></div></div>
<div class="row" style="top:492.6px"><div class="a" style="left:16.9px;top:24.6px;width:3px;height:3px;border-radius:50%;background:#111"></div><svg class="ig" style="left:102px;top:15px;width:20px;height:20px" viewBox="0 0 20 20"><defs><radialGradient id="igf9" cx="0.25" cy="1.05" r="1.25"><stop offset="0" stop-color="#ffd34a"/><stop offset="0.18" stop-color="#ff9a2a"/><stop offset="0.45" stop-color="#f3394f"/><stop offset="0.75" stop-color="#c42f9a"/><stop offset="1" stop-color="#7a3ad8"/></radialGradient><linearGradient id="igb9" x1="0" y1="0" x2="0.5" y2="0.6"><stop offset="0" stop-color="#4f5bd5" stop-opacity=".9"/><stop offset="1" stop-color="#4f5bd5" stop-opacity="0"/></linearGradient></defs><rect x="0" y="0" width="20" height="20" rx="5.5" fill="url(#igf9)"/><rect x="0" y="0" width="20" height="20" rx="5.5" fill="url(#igb9)"/><rect x="3.6" y="3.6" width="12.8" height="12.8" rx="3.6" fill="none" stroke="#fff" stroke-width="1.25"/><circle cx="10" cy="10" r="3.1" fill="none" stroke="#fff" stroke-width="1.25"/><circle cx="13.9" cy="6.1" r=".8" fill="#fff"/></svg><svg class="av" viewBox="0 0 28 28"><defs><clipPath id="avc8"><circle cx="14" cy="14" r="14"/></clipPath><filter id="avb8" x="-10%" y="-10%" width="120%" height="120%"><feGaussianBlur stdDeviation="0.9"/></filter></defs><g clip-path="url(#avc8)"><g filter="url(#avb8)"><rect width="28" height="28" fill="#2e5428"/><rect x="0" y="0" width="8" height="28" fill="#1e3a1c"/><rect x="20" y="4" width="8" height="20" fill="#3a6a34"/><ellipse cx="12" cy="3" rx="5" ry="3" fill="#8aa8b8"/>
<path d="M8 6 Q14 3 20 7 L21 22 L7 22z" fill="#141414"/><ellipse cx="14.5" cy="10.5" rx="3" ry="3.6" fill="#d8c0b0"/><rect x="13" y="12.5" width="3" height="1" fill="#c04848"/>
<path d="M3 20 Q8 16 11 18 L14 22 L18 18 Q23 18 24 24 L24 28 L3 28z" fill="#b0aca0"/></g></g></svg><div class="nm">dana042_x</div><div class="sub"><span class="h">이다은</span></div><svg class="gal" viewBox="0 0 24 24"><path fill="#3c4045" d="M20 4v12H8V4h12m0-2H8c-1.1 0-2 .9-2 2v12c0 1.1.9 2 2 2h12c1.1 0 2-.9 2-2V4c0-1.1-.9-2-2-2zm-8.5 9.67l1.69 2.26 2.48-3.1L19 15H9zM2 6v14c0 1.1.9 2 2 2h14v-2H4V6H2z"/></svg><div class="tags"><span class="tag y"><span class="h">라이브 커머스</span>/<span class="h">쇼호스트</span></span><span class="tag p"><span class="h">요가</span></span></div><div class="sc">18,222 <span class="h">점</span></div><div class="bars"><i style="left:0.0px;height:3px"></i><i style="left:17.0px;height:11.5px"></i><i style="left:34.0px;height:11.5px"></i><i style="left:51.0px;height:20px"></i><i style="left:68.0px;height:22.7px"></i><i style="left:85.0px;height:20px"></i></div><div class="c" style="left:955.7px">18-24<span class="h">세 여성</span></div><div class="c" style="left:1064.7px">1,234<span class="h">만 명</span></div><div class="c" style="left:1154.6px">123,4<span class="h">만 명</span></div><div class="c" style="left:1244.3px">123,4<span class="h">만 명</span></div><div class="c gr" style="left:1366.2px"><svg class="tri2" viewBox="0 0 9 7"><path d="M4.5 0L9 7H0z" fill="#3d8ef5"/></svg><span style="letter-spacing:0.6px">111%</span> <span style="color:#555">(32.4만)</span></div></div>
</div></div></div></body></html>
